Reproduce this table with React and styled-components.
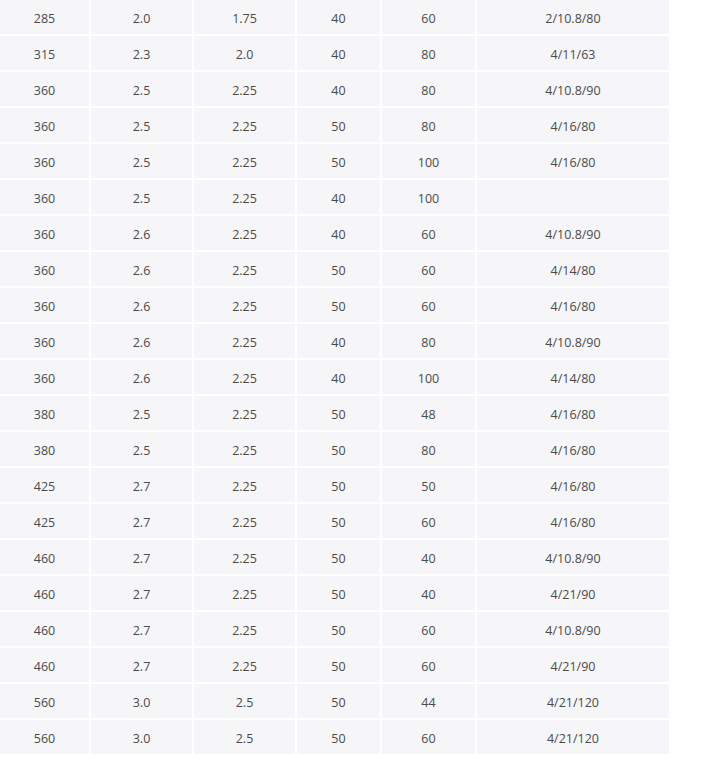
import React from 'react'
import styled, { createGlobalStyle } from 'styled-components'

const GlobalStyle = createGlobalStyle`
  body {
    margin: 0;
    background: #fff;
    font-family: "Open Sans", "Noto Sans", sans-serif;
  }
`

const Table = styled.table`
  border-collapse: separate;
  border-spacing: 0;
  table-layout: fixed;
  width: 669px;
`

const Cell = styled.td`
  width: ${props => props.w}px;
  height: 32px;
  padding: 2px 0 0;
  background-color: #f6f6f8;
  border-right: 2px solid #fff;
  border-bottom: 2px solid #fff;
  text-align: center;
  vertical-align: middle;
  font-size: 12.5px;
  color: #4a4a4a;
`

const widths = [89, 101, 101, 83, 93, 192]

const rows = [
  ['285', '2.0', '1.75', '40', '60', '2/10.8/80'],
  ['315', '2.3', '2.0', '40', '80', '4/11/63'],
  ['360', '2.5', '2.25', '40', '80', '4/10.8/90'],
  ['360', '2.5', '2.25', '50', '80', '4/16/80'],
  ['360', '2.5', '2.25', '50', '100', '4/16/80'],
  ['360', '2.5', '2.25', '40', '100', ''],
  ['360', '2.6', '2.25', '40', '60', '4/10.8/90'],
  ['360', '2.6', '2.25', '50', '60', '4/14/80'],
  ['360', '2.6', '2.25', '50', '60', '4/16/80'],
  ['360', '2.6', '2.25', '40', '80', '4/10.8/90'],
  ['360', '2.6', '2.25', '40', '100', '4/14/80'],
  ['380', '2.5', '2.25', '50', '48', '4/16/80'],
  ['380', '2.5', '2.25', '50', '80', '4/16/80'],
  ['425', '2.7', '2.25', '50', '50', '4/16/80'],
  ['425', '2.7', '2.25', '50', '60', '4/16/80'],
  ['460', '2.7', '2.25', '50', '40', '4/10.8/90'],
  ['460', '2.7', '2.25', '50', '40', '4/21/90'],
  ['460', '2.7', '2.25', '50', '60', '4/10.8/90'],
  ['460', '2.7', '2.25', '50', '60', '4/21/90'],
  ['560', '3.0', '2.5', '50', '44', '4/21/120'],
  ['560', '3.0', '2.5', '50', '60', '4/21/120'],
]

export default function App() {
  return (
    <>
      <GlobalStyle />
      <Table>
        <tbody>
          {rows.map((row, i) => (
            <tr key={i}>
              {row.map((val, j) => (
                <Cell key={j} w={widths[j]}>{val}</Cell>
              ))}
            </tr>
          ))}
        </tbody>
      </Table>
    </>
  )
}
